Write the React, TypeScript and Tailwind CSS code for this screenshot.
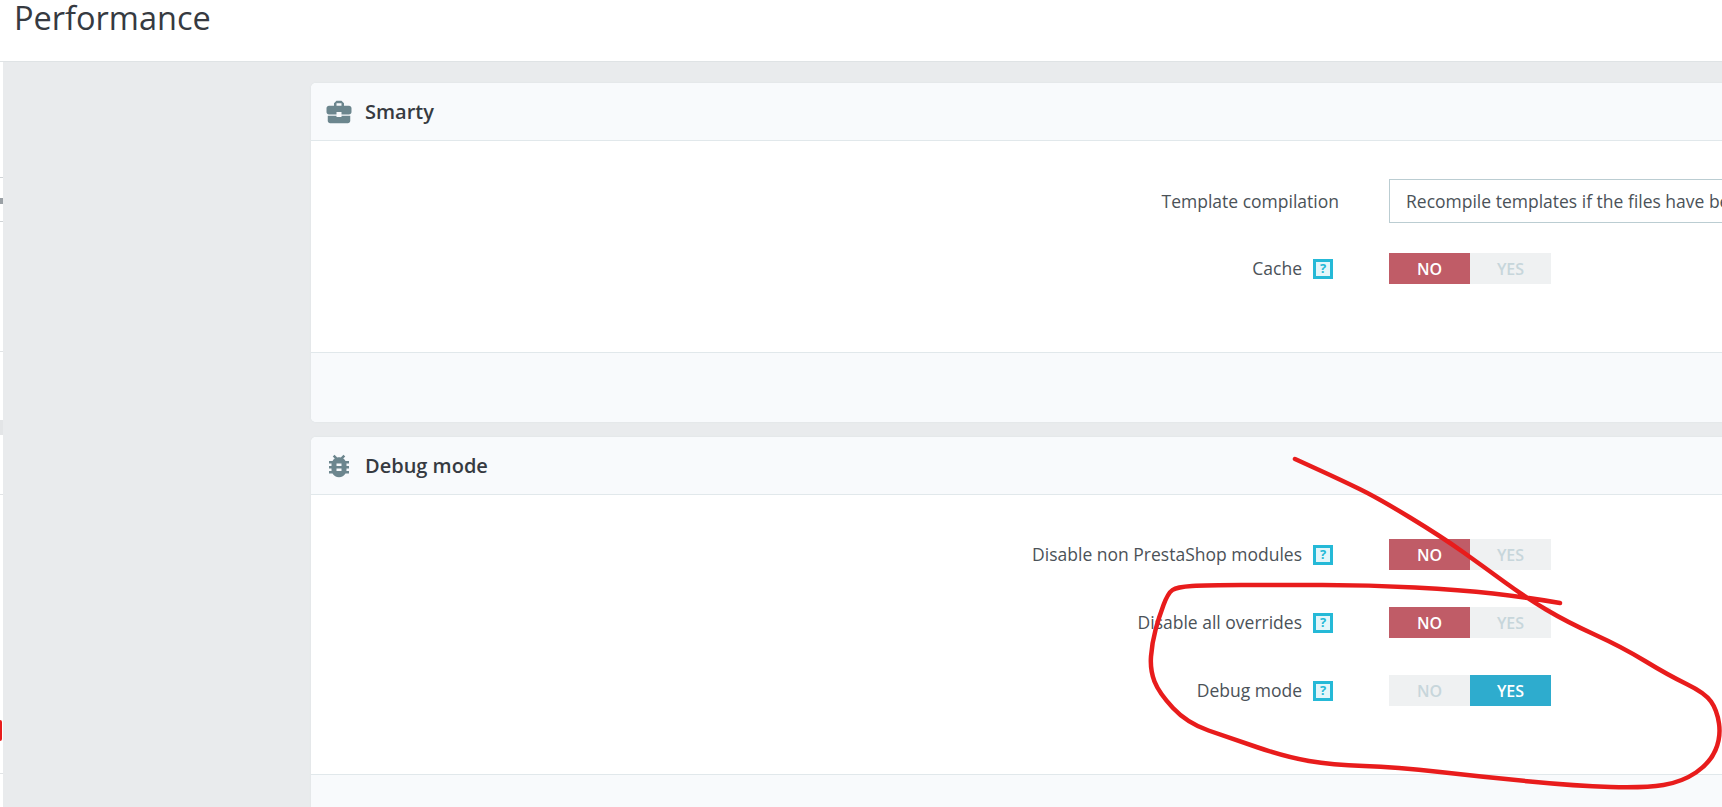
import { MdBugReport, MdBusinessCenter } from 'react-icons/md';

const sans = { fontFamily: '"Open Sans", "Noto Sans", sans-serif' };

// hand-drawn annotation, traced off the picture
const scribble: [number, number][] = [
  [1560, 603], [1525, 597], [1461, 590], [1369, 585], [1276, 585], [1207, 585], [1177, 587], [1168, 593],
  [1159, 617], [1152, 643], [1150, 670], [1159, 693], [1187, 723], [1230, 738], [1286, 757], [1332, 765],
  [1396, 767], [1484, 777], [1576, 786], [1645, 788], [1682, 782], [1710, 763], [1721, 737], [1717, 710],
  [1705, 693], [1668, 675], [1622, 647], [1567, 622], [1525, 597], [1484, 567], [1442, 537], [1378, 498],
  [1341, 480], [1295, 459],
];

function smoothPath(points: [number, number][]) {
  let d = `M${points[0][0]} ${points[0][1]}`;
  for (let i = 1; i < points.length - 1; i++) {
    const [x, y] = points[i];
    const [nx, ny] = points[i + 1];
    d += ` Q${x} ${y} ${(x + nx) / 2} ${(y + ny) / 2}`;
  }
  const last = points[points.length - 1];
  return `${d} L${last[0]} ${last[1]}`;
}

function HelpBox() {
  return (
    <span className="flex h-[20px] w-[20px] items-center justify-center border-[3px] border-[#25b9d7] bg-[#e4f6fa] text-[13px] leading-none font-bold text-[#25b9d7]">
      ?
    </span>
  );
}

function Toggle({ on }: { on: boolean }) {
  return (
    <div className="flex h-[31px] w-[162px] bg-[#eff1f2] text-[16px] font-semibold text-[#c7d6db]">
      <span className={`flex w-[81px] items-center justify-center ${on ? '' : 'bg-[#c05c67] text-white'}`}>NO</span>
      <span className={`flex w-[81px] items-center justify-center ${on ? 'bg-[#2eacce] text-white' : ''}`}>YES</span>
    </div>
  );
}

function Row({ label, help, children }: { label: string; help?: boolean; children: React.ReactNode }) {
  return (
    <div className="flex items-center">
      <div className={`flex w-[1028px] shrink-0 items-center justify-end gap-[11px] text-[17.5px] text-[#4b5258] ${help ? 'pr-[6px]' : ''}`}>
        <span>{label}</span>
        {help ? <HelpBox /> : null}
      </div>
      <div className="ml-[50px] shrink-0">{children}</div>
    </div>
  );
}

function Panel({
  title,
  icon,
  bodyClass,
  children,
}: {
  title: string;
  icon: React.ReactNode;
  bodyClass: string;
  children: React.ReactNode;
}) {
  return (
    <section className="w-[1500px] rounded-[5px] bg-white shadow-[0_0_2px_#d9e0e3]">
      <header className="flex h-[58px] items-center rounded-t-[5px] border-b border-[#e1e8eb] bg-[#f8fafc] pl-[13px] text-[#363a41]">
        <span className="flex w-[41px] text-[#6c868e]">{icon}</span>
        <h2 className="text-[20px] font-semibold">{title}</h2>
      </header>
      <div className={bodyClass}>{children}</div>
      <div className="h-[70px] rounded-b-[5px] border-t border-[#e1e8eb] bg-[#f8fafc]" />
    </section>
  );
}

export default function App() {
  return (
    <div className="relative flex h-[807px] w-[1722px] flex-col overflow-hidden bg-white" style={sans}>
      <header className="h-[62px] shrink-0 border-b border-[#dfe3e5] pl-[14px]">
        <h1 className="text-[32.5px] leading-[36px] text-[#363a41]">Performance</h1>
      </header>

      <div className="flex flex-1">
        <div className="relative w-[3px] shrink-0 bg-white">
          <div className="absolute top-[115px] h-px w-full bg-[#cfd3d6]" />
          <div className="absolute top-[136px] h-[6px] w-full bg-[#9aa0a5]" />
          <div className="absolute top-[159px] h-px w-full bg-[#cfd3d6]" />
          <div className="absolute top-[289px] h-px w-full bg-[#e1e4e6]" />
          <div className="absolute top-[358px] h-[15px] w-full bg-[#e3e5e7]" />
          <div className="absolute top-[432px] h-px w-full bg-[#e1e4e6]" />
          <div className="absolute top-[658px] h-[21px] w-[2px] rounded-r-full bg-[#e81c1c]" />
          <div className="absolute top-[711px] h-px w-full bg-[#e1e4e6]" />
        </div>

        <main className="flex flex-1 flex-col gap-[15px] bg-[#e9ebed] pt-[21px] pl-[308px]">
          <Panel
            title="Smarty"
            icon={<MdBusinessCenter size={30} />}
            bodyClass="flex h-[211px] flex-col gap-[30px] pt-[38px]"
          >
            <Row label="Template compilation">
              <div className="flex h-[44px] w-[500px] items-center border border-[#bbcdd2] pl-[16px] text-[17.5px] whitespace-nowrap text-[#4b5258]">
                Recompile templates if the files have been updated
              </div>
            </Row>
            <Row label="Cache" help>
              <Toggle on={false} />
            </Row>
          </Panel>

          <Panel
            title="Debug mode"
            icon={<MdBugReport size={30} />}
            bodyClass="flex h-[279px] flex-col gap-[37px] pt-[44px]"
          >
            <Row label="Disable non PrestaShop modules" help>
              <Toggle on={false} />
            </Row>
            <Row label="Disable all overrides" help>
              <Toggle on={false} />
            </Row>
            <Row label="Debug mode" help>
              <Toggle on />
            </Row>
          </Panel>
        </main>
      </div>

      <svg className="pointer-events-none absolute top-0 left-0" width="1722" height="807" fill="none">
        <path d={smoothPath(scribble)} stroke="#e81c1c" strokeWidth="4.5" strokeLinecap="round" strokeLinejoin="round" />
      </svg>
    </div>
  );
}
